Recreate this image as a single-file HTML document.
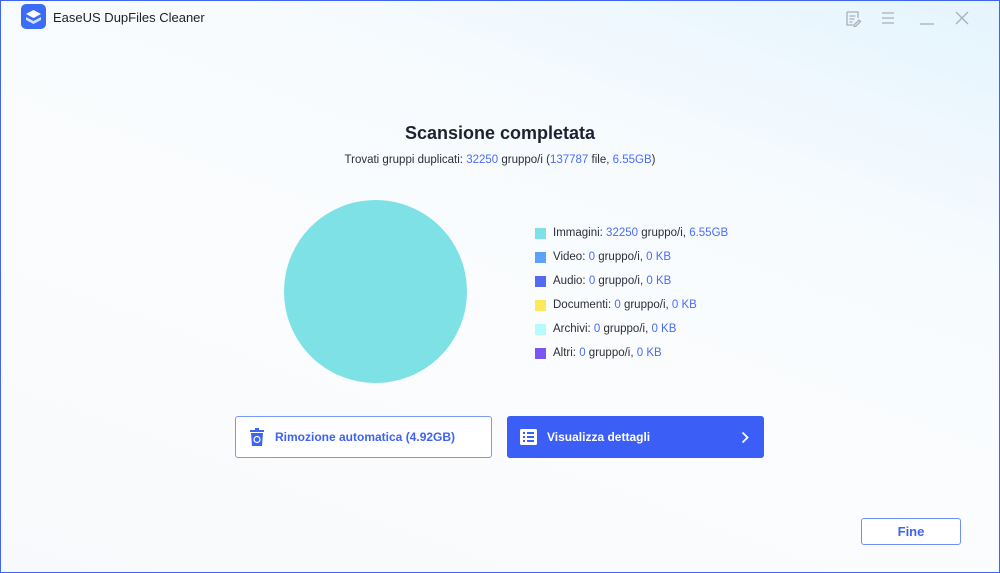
<!DOCTYPE html>
<html><head><meta charset="utf-8"><style>
*{margin:0;padding:0;box-sizing:border-box}
body{width:1000px;height:573px;overflow:hidden;font-family:"Liberation Sans",sans-serif;}
.win{position:absolute;left:0;top:0;width:1000px;height:573px;background:linear-gradient(200deg,#e4f4fd 0%,#f7fbfe 30%,#fbfcfd 60%,#f7f9fc 100%);}
.frame{position:absolute;left:0;top:0;width:1000px;height:573px;border:1px solid #3f63f2;pointer-events:none}
.t{position:absolute;white-space:nowrap;color:#1f2430}
.b{color:#4a6cf7}
.leg{position:absolute;left:535px;font-size:11.5px;color:#2b2f3a;white-space:nowrap}
.leg i{position:absolute;left:0;top:1px;width:11px;height:11px}
.leg span.l{position:absolute;left:18px;top:0px}
</style></head><body><div class="win">
<svg style="position:absolute;left:21px;top:4px" width="25" height="25" viewBox="0 0 25 25"><rect width="25" height="25" rx="5" fill="#3b6cf6"/><path d="M5 10l7.5-4 7.5 4-7.5 4z" fill="#fff"/><path d="M5 13l7.5 4 7.5-4v3l-7.5 4-7.5-4z" fill="#cfe0ff"/></svg>
<div class="t" style="left:53px;top:10px;font-size:13px;color:#222">EaseUS DupFiles Cleaner</div>
<svg style="position:absolute;left:845px;top:11px" width="125" height="16" viewBox="0 0 125 16" stroke="#a9b0bb" stroke-width="1.3" fill="none"><path d="M2 1h11v6M2 1v13h6M4.5 5h6M4.5 8h5M4.5 11h3M9 14l5-5 1.5 1.5-5 5H9z"/><path d="M37 2h12M37 7h12M37 12h12"/><path d="M75 13h14"/><path d="M111 1l12 12M123 1l-12 12"/></svg>
<div class="t" style="left:0;width:1000px;text-align:center;top:123px;font-size:18px;font-weight:bold;color:#1d2230">Scansione completata</div>
<div class="t" style="left:0;width:1000px;text-align:center;top:154px;font-size:11.5px;color:#2b2f3a">Trovati gruppi duplicati: <span class="b">32250</span> gruppo/i (<span class="b">137787</span> file, <span class="b">6.55GB</span>)</div>
<div style="position:absolute;left:284px;top:200px;width:183px;height:183px;border-radius:50%;background:#7de1e6"></div>
<div class="leg" style="top:227px"><i style="background:#7de1e6"></i><span class="l">Immagini: <span class="b">32250</span> gruppo/i, <span class="b">6.55GB</span></span></div>
<div class="leg" style="top:251px"><i style="background:#5ba2f8"></i><span class="l">Video: <span class="b">0</span> gruppo/i, <span class="b">0 KB</span></span></div>
<div class="leg" style="top:275px"><i style="background:#5569f3"></i><span class="l">Audio: <span class="b">0</span> gruppo/i, <span class="b">0 KB</span></span></div>
<div class="leg" style="top:299px"><i style="background:#fbe95b"></i><span class="l">Documenti: <span class="b">0</span> gruppo/i, <span class="b">0 KB</span></span></div>
<div class="leg" style="top:323px"><i style="background:#b5fbfb"></i><span class="l">Archivi: <span class="b">0</span> gruppo/i, <span class="b">0 KB</span></span></div>
<div class="leg" style="top:347px"><i style="background:#7c56f4"></i><span class="l">Altri: <span class="b">0</span> gruppo/i, <span class="b">0 KB</span></span></div>
<div style="position:absolute;left:235px;top:416px;width:257px;height:42px;border:1px solid #7b97f7;border-radius:3px;background:#fff"></div>
<svg style="position:absolute;left:249px;top:428px" width="16" height="18" viewBox="0 0 16 18"><rect x="1" y="2" width="14" height="2" fill="#3e63f2"/><rect x="6" y="0" width="4" height="2" fill="#3e63f2"/><path d="M2 5h12l-1 13H3z" fill="#3e63f2"/><circle cx="8" cy="11.5" r="3" fill="none" stroke="#fff" stroke-width="1.2"/></svg>
<div class="t" style="left:275px;top:430px;font-size:12px;font-weight:bold;color:#3e63f2">Rimozione automatica (4.92GB)</div>
<div style="position:absolute;left:507px;top:416px;width:257px;height:42px;border-radius:3px;background:#3b5ff6"></div>
<svg style="position:absolute;left:520px;top:429px" width="17" height="16" viewBox="0 0 17 16"><rect width="17" height="16" rx="1.5" fill="#fff"/><g fill="#3b5ff6"><rect x="3" y="3" width="2" height="2"/><rect x="7" y="3" width="7" height="2"/><rect x="3" y="7" width="2" height="2"/><rect x="7" y="7" width="7" height="2"/><rect x="3" y="11" width="2" height="2"/><rect x="7" y="11" width="7" height="2"/></g></svg>
<div class="t" style="left:547px;top:430px;font-size:12px;font-weight:bold;color:#fff">Visualizza dettagli</div>
<svg style="position:absolute;left:741px;top:431px" width="8" height="13" viewBox="0 0 8 13"><path d="M1.5 1.5l5 5-5 5" stroke="#fff" stroke-width="1.8" fill="none"/></svg>
<div style="position:absolute;left:861px;top:518px;width:100px;height:27px;border:1px solid #6f8ef7;border-radius:3px;background:#fff;text-align:center;line-height:25px;font-size:13px;font-weight:bold;color:#3e63f2">Fine</div>
</div><div class="frame"></div></body></html>
